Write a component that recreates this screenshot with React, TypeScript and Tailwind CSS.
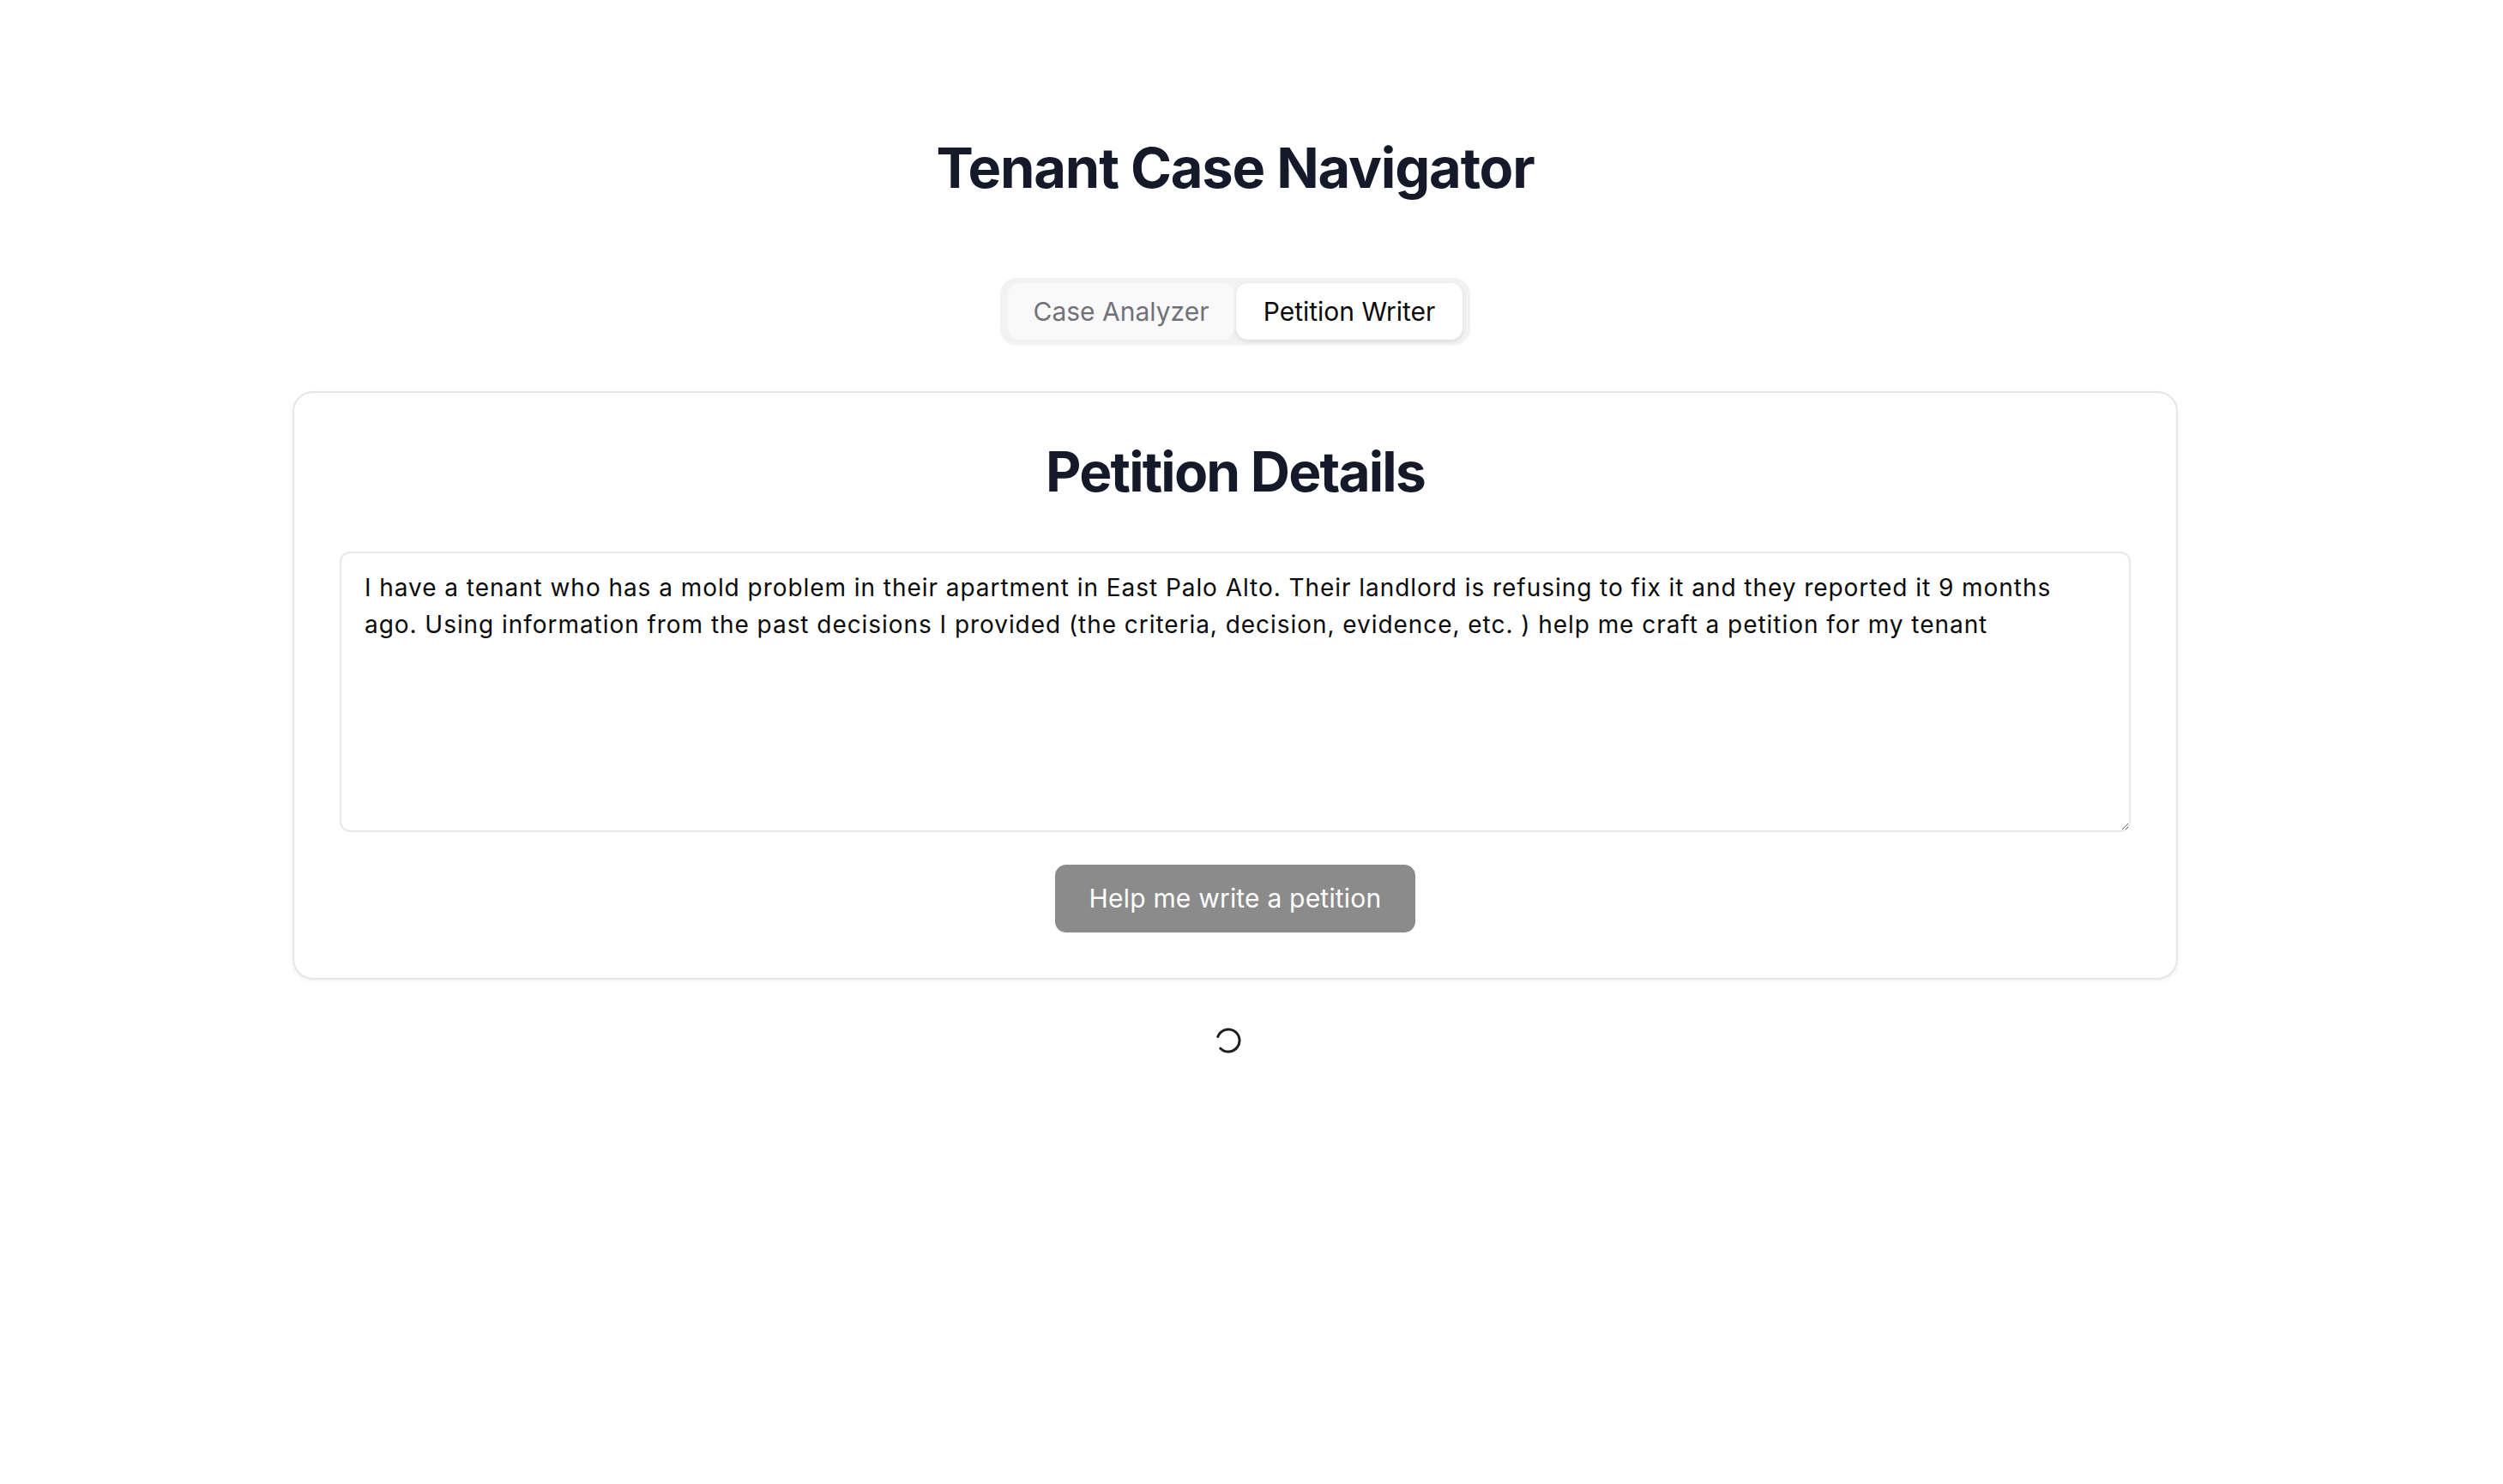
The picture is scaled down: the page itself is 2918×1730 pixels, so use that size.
import React from 'react';

const petitionText =
  'I have a tenant who has a mold problem in their apartment in East Palo Alto. Their landlord is refusing to fix it and they reported it 9 months ago. Using information from the past decisions I provided (the criteria, decision, evidence, etc. ) help me craft a petition for my tenant';

const Spinner: React.FC = () => (
  <svg width="30" height="30" viewBox="0 0 30 30" fill="none">
    <path
      d="M2.78 10.55 A13 13 0 1 1 5.81 24.19"
      stroke="#1f1f1f"
      strokeWidth="3"
      strokeLinecap="round"
    />
  </svg>
);

const App: React.FC = () => {
  const [tab, setTab] = React.useState<'analyzer' | 'writer'>('writer');

  return (
    <div className="min-h-screen w-[2880px] bg-white font-['Inter','Noto_Sans',sans-serif] text-[#0a0a0a]">
      <div className="flex flex-col items-center pt-[160px]">
        <h1 className="text-[65px] leading-[72px] font-bold tracking-[-1.2px] text-[#141a29]">
          Tenant Case Navigator
        </h1>

        {/* tabs */}
        <div className="mt-[92px] flex gap-[2px] rounded-[20px] bg-[#f2f2f3] px-[9px] py-[6px] shadow-[0_1px_3px_rgba(0,0,0,0.04)]">
          <button
            onClick={() => setTab('analyzer')}
            className={`h-[66px] w-[264px] rounded-[14px] text-[30px] ${
              tab === 'analyzer'
                ? 'bg-white text-[#0a0a0a] shadow-[0_2px_5px_rgba(0,0,0,0.1)]'
                : 'bg-[#f9f9f9] text-[#71717a]'
            }`}
          >
            Case Analyzer
          </button>
          <button
            onClick={() => setTab('writer')}
            className={`h-[66px] w-[264px] rounded-[14px] text-[30px] ${
              tab === 'writer'
                ? 'bg-white text-[#0a0a0a] shadow-[0_2px_5px_rgba(0,0,0,0.1)]'
                : 'bg-[#f9f9f9] text-[#71717a]'
            }`}
          >
            Petition Writer
          </button>
        </div>

        {/* card */}
        <div className="mt-[54px] w-[2198px] rounded-[24px] border-2 border-[#e6e6e6] bg-white p-[53px] shadow-[0_2px_6px_rgba(0,0,0,0.05)]">
          <h2 className="text-center text-[64px] leading-[78px] font-bold tracking-[-1.8px] text-[#141a29]">
            Petition Details
          </h2>
          <textarea
            defaultValue={petitionText}
            className="mt-[54px] block h-[327px] w-full rounded-[12px] border-2 border-[#e8e8e8] bg-white pl-[27px] pr-[60px] pt-[19px] text-[28px] leading-[43px] tracking-[0.95px] text-[#0a0a0a] outline-none"
          />
          <div className="mt-[38px] flex justify-center">
            <button className="h-[79px] w-[420px] rounded-[13px] bg-[#8b8b8c] text-[30px] tracking-[0.2px] text-white shadow-[0_1px_2px_rgba(0,0,0,0.05)]">
              Help me write a petition
            </button>
          </div>
        </div>

        <div className="mt-[56px] mr-[16px]">
          <Spinner />
        </div>
      </div>
    </div>
  );
};

export default App;
